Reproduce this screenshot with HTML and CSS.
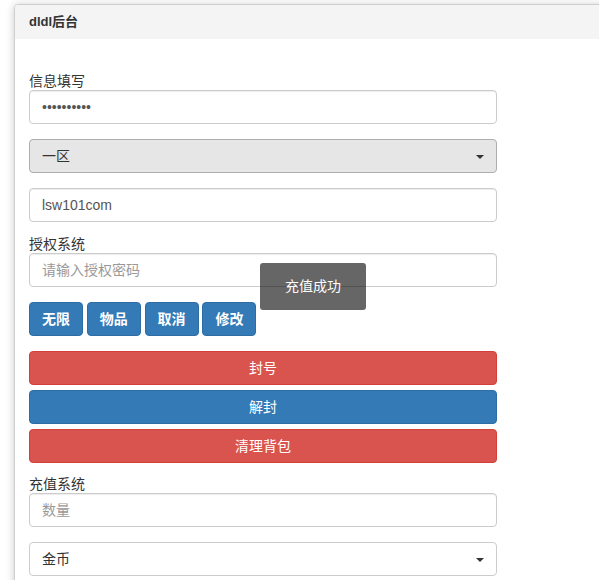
FILE: index.html
```html
<!DOCTYPE html>
<html lang="zh">
<head>
<meta charset="utf-8">
<title>dldl后台</title>
<link rel="stylesheet" href="styles.css">
</head>
<body>
<div class="panel">
  <div class="panel-heading">dldl后台</div>
  <div class="panel-body">
    <div class="label">信息填写</div>
    <input class="control" type="password" value="1234567890">
    <div class="control select select-active"><span>一区</span><span class="caret"></span></div>
    <input class="control" type="text" value="lsw101com">
    <div class="label label-gap">授权系统</div>
    <input class="control" type="text" placeholder="请输入授权密码">
    <div class="btn-row">
      <button class="btn btn-primary btn-bold">无限</button>
      <button class="btn btn-primary btn-bold">物品</button>
      <button class="btn btn-primary btn-bold">取消</button>
      <button class="btn btn-primary btn-bold">修改</button>
    </div>
    <div class="btn-stack">
      <button class="btn btn-danger btn-block">封号</button>
      <button class="btn btn-primary btn-block">解封</button>
      <button class="btn btn-danger btn-block">清理背包</button>
    </div>
    <div class="label label-gap2">充值系统</div>
    <input class="control" type="text" placeholder="数量">
    <div class="control select"><span>金币</span><span class="caret"></span></div>
  </div>
  <div class="toast">充值成功</div>
</div>
</body>
</html>
```
FILE: styles.css
```css
html, body {
  margin: 0;
  padding: 0;
  background: #fff;
  overflow: hidden;
}
body {
  font-family: "Liberation Sans", "Noto Sans CJK SC", sans-serif;
  font-size: 14px;
  line-height: 20px;
  color: #333;
}
.panel {
  position: relative;
  margin: 4px 0 0 14px;
  width: 660px;
  border: 1px solid #cfcfcf;
  border-radius: 4px;
  box-shadow: 0 1px 8px rgba(0, 0, 0, 0.22);
  background: #fff;
}
.panel-heading {
  background: #f4f4f4;
  padding: 10px 14px;
  height: 14px;
  line-height: 14px;
  font-size: 13px;
  font-weight: bold;
  color: #333;
  border-radius: 3px 3px 0 0;
}
.panel-body {
  padding: 33px 14px 40px;
  width: 468px;
  display: flex;
  flex-direction: column;
}
.label {
  line-height: 18px;
  height: 18px;
  font-size: 14px;
  color: #333;
}
.label-gap { margin-top: -2px; }
.label-gap2 { margin-top: 12px; }
.control {
  box-sizing: border-box;
  width: 468px;
  height: 34px;
  padding: 6px 12px;
  border: 1px solid #ccc;
  border-radius: 4px;
  font-family: "Liberation Sans", "Noto Sans CJK SC", sans-serif;
  font-size: 14px;
  line-height: 20px;
  color: #555;
  background: #fff;
  box-shadow: inset 0 1px 1px rgba(0, 0, 0, 0.075);
  margin: 0 0 15px;
  outline: none;
}
.control::placeholder { color: #999; }
.select {
  display: flex;
  align-items: center;
  justify-content: space-between;
  color: #333;
  box-shadow: none;
}
.select-active {
  background: #e6e6e6;
  border-color: #adadad;
}
.caret {
  width: 0;
  height: 0;
  border-top: 4px solid #333;
  border-left: 4px solid transparent;
  border-right: 4px solid transparent;
  margin-top: 1px;
}
.btn-row {
  display: flex;
  gap: 3.8px;
  margin-bottom: 15px;
}
.btn-row .btn {
  width: 54px;
  padding: 6px 0;
  text-align: center;
}
.btn {
  box-sizing: border-box;
  height: 34px;
  padding: 6px 12px;
  border: 1px solid transparent;
  border-radius: 4px;
  font-family: "Liberation Sans", "Noto Sans CJK SC", sans-serif;
  font-size: 14px;
  line-height: 20px;
  color: #fff;
  cursor: pointer;
}
.btn-bold { font-weight: bold; }
.btn-primary {
  background: #337ab7;
  border-color: #2e6da4;
}
.btn-danger {
  background: #d9534f;
  border-color: #d43f3a;
}
.btn-stack {
  display: flex;
  flex-direction: column;
  gap: 5px;
}
.btn-block { width: 468px; }
.toast {
  position: absolute;
  left: 245px;
  top: 258px;
  width: 106px;
  height: 47px;
  line-height: 47px;
  text-align: center;
  background: rgba(0, 0, 0, 0.6);
  color: #fff;
  font-size: 14px;
  border-radius: 3px;
}
```
